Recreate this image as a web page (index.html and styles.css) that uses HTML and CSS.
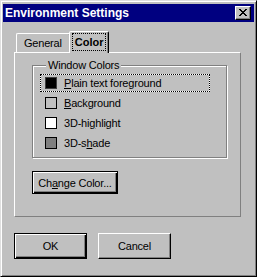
FILE: index.html
```html
<!DOCTYPE html>
<html>
<head>
<meta charset="utf-8">
<link rel="stylesheet" href="styles.css">
</head>
<body>
<div class="window">
  <div class="titlebar">
    <span class="title">Environment Settings</span>
    <button class="close" aria-label="Close">
      <svg width="8" height="7" viewBox="0 0 8 7" shape-rendering="crispEdges">
        <path d="M0 0h2v1h-2z M6 0h2v1h-2z M1 1h2v1h-2z M5 1h2v1h-2z M2 2h4v1h-4z M3 3h2v1h-2z M2 4h4v1h-4z M1 5h2v1h-2z M5 5h2v1h-2z M0 6h2v1h-2z M6 6h2v1h-2z" fill="#000"/>
      </svg>
    </button>
  </div>
  <div class="content">
    <div class="tabs">
      <div class="tab">General</div>
      <div class="tab active"><span class="tabfocus">Color</span></div>
    </div>
    <div class="panel">
      <fieldset class="group">
        <legend>Window Colors</legend>
        <div class="item selected"><span class="swatch black"></span><span><u>P</u>lain text foreground</span></div>
        <div class="item"><span class="swatch gray"></span><span><u>B</u>ackground</span></div>
        <div class="item"><span class="swatch white"></span><span>3D-hi<u>g</u>hlight</span></div>
        <div class="item"><span class="swatch dark"></span><span>3D-s<u>h</u>ade</span></div>
      </fieldset>
      <button class="btn default change">Ch<u>a</u>nge Color...</button>
    </div>
    <div class="buttons">
      <button class="btn default dlg">OK</button>
      <button class="btn dlg">Cancel</button>
    </div>
  </div>
</div>
</body>
</html>
```

FILE: styles.css
```css
* { box-sizing: border-box; }
html, body { margin: 0; padding: 0; }
body {
  width: 257px;
  height: 277px;
  background: #c0c0c0;
  font-family: "Liberation Sans", Arial, sans-serif;
  font-size: 11px;
  letter-spacing: -0.2px;
  color: #000;
}
.window {
  width: 257px;
  height: 277px;
  background: #c0c0c0;
  border: 1px solid;
  border-color: #dfdfdf #000 #000 #dfdfdf;
  box-shadow: inset 1px 1px #fff, inset -1px -1px #808080;
  padding: 3px 2px 2px 2px;
  display: flex;
  flex-direction: column;
}
.titlebar {
  height: 18px;
  background: #000080;
  color: #fff;
  display: flex;
  align-items: center;
  justify-content: space-between;
  padding: 0 3px 0 2px;
}
.title {
  font-weight: bold;
  font-size: 12px;
  letter-spacing: 0;
  line-height: 14px;
}
.close {
  width: 16px;
  height: 14px;
  padding: 0;
  background: #c0c0c0;
  border: 1px solid;
  border-color: #fff #000 #000 #fff;
  box-shadow: inset -1px -1px #808080;
  display: flex;
  align-items: center;
  justify-content: center;
}
.close svg { display: block; margin-left: -1px; margin-top: -1px; }
.content {
  padding: 9px 13px 0 11px;
  display: flex;
  flex-direction: column;
}
.tabs {
  display: flex;
  align-items: flex-end;
  padding-left: 2px;
  height: 21px;
}
.tab {
  height: 19px;
  padding: 0 8px 0 7px;
  border: 1px solid;
  border-bottom: none;
  border-color: #fff #000 transparent #fff;
  border-radius: 2px 2px 0 0;
  box-shadow: inset -1px 0 #808080;
  display: flex;
  align-items: center;
  line-height: 13px;
}
.tab.active {
  height: 22px;
  margin: 0 -2px -1px -2px;
  padding: 0 2px 1px 2px;
  font-weight: bold;
  letter-spacing: 0;
  background: #c0c0c0;
  position: relative;
  z-index: 1;
}
.tabfocus {
  border: 1px dotted #000;
  padding: 1px 2px;
  line-height: 14px;
}
.panel {
  height: 165px;
  border: 1px solid;
  border-color: #fff #808080 #808080 #fff;
  padding: 6px 13px 0 17px;
}
.group {
  margin: 0;
  padding: 2px 0 5px 7px;
  width: 195px;
  border: 1px solid #808080;
  box-shadow: inset 1px 1px #fff, 1px 1px #fff;
  min-width: 0;
}
.group legend {
  padding: 0 2px;
  margin-left: 6px;
  line-height: 13px;
  background: #c0c0c0;
}
.item {
  width: 170px;
  height: 18px;
  margin-bottom: 2px;
  display: flex;
  align-items: center;
  padding-left: 4px;
  gap: 7px;
  border: 1px solid transparent;
}
.item:last-child { margin-bottom: 0; }
.item.selected {
  border: 1px solid #fff;
  outline: 1px dotted #000;
  outline-offset: -1px;
}
.swatch {
  width: 12px;
  height: 12px;
  border: 1px solid #000;
  flex: none;
}
.swatch.black { background: #000; border-color: #404040; }
.swatch.gray { background: #c0c0c0; }
.swatch.white { background: #fff; }
.swatch.dark { background: #808080; }
.btn {
  font: inherit;
  letter-spacing: inherit;
  color: #000;
  background: #c0c0c0;
  border: 1px solid;
  border-color: #fff #000 #000 #fff;
  box-shadow: inset -1px -1px #808080;
  padding: 0;
}
.btn.default {
  border-color: #000;
  box-shadow: inset 1px 1px #fff, inset -1px -1px #000, inset -2px -2px #808080;
}
.change {
  display: block;
  margin-top: 13px;
  width: 86px;
  height: 23px;
}
.buttons {
  display: flex;
  gap: 11px;
  margin-top: 16px;
}
.dlg {
  width: 73px;
  height: 26px;
}
```
